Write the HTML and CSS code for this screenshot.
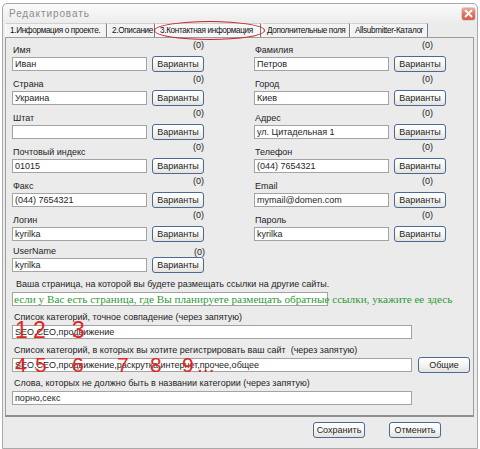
FILE: index.html
```html
<!DOCTYPE html>
<html lang="ru">
<head>
<meta charset="utf-8">
<title>Редактировать</title>
<link rel="stylesheet" href="styles.css">
</head>
<body>
<div class="window">
  <div class="titlebar">
    <span class="title">Редактировать</span>
    <span class="close"><svg width="9" height="9" viewBox="0 0 9 9"><path d="M1 1 L8 8 M8 1 L1 8" stroke="#fff" stroke-width="1.8" fill="none"/></svg></span>
  </div>
  <div class="tabs">
    <span class="tab t1">1.Информация о проекте.</span>
    <span class="tab t2">2.Описание</span>
    <span class="tab t3 active">3.Контактная информация</span>
    <span class="tab t4">Дополнительные поля</span>
    <span class="tab t5">Allsubmitter-Каталог</span>
    <span class="ring"></span>
  </div>
  <div class="panel">
    <div class="fields">
      <div class="field"><span class="lbl">Имя</span><span class="cnt">(0)</span><input class="inp" type="text" value="Иван"><button class="btn">Варианты</button></div>
      <div class="field right"><span class="lbl">Фамилия</span><span class="cnt">(0)</span><input class="inp" type="text" value="Петров"><button class="btn">Варианты</button></div>
      <div class="field"><span class="lbl">Страна</span><span class="cnt">(0)</span><input class="inp" type="text" value="Украина"><button class="btn">Варианты</button></div>
      <div class="field right"><span class="lbl">Город</span><span class="cnt">(0)</span><input class="inp" type="text" value="Киев"><button class="btn">Варианты</button></div>
      <div class="field"><span class="lbl">Штат</span><span class="cnt">(0)</span><input class="inp" type="text" value=""><button class="btn">Варианты</button></div>
      <div class="field right"><span class="lbl">Адрес</span><span class="cnt">(0)</span><input class="inp" type="text" value="ул. Цитадельная 1"><button class="btn">Варианты</button></div>
      <div class="field"><span class="lbl">Почтовый индекс</span><span class="cnt">(0)</span><input class="inp" type="text" value="01015"><button class="btn">Варианты</button></div>
      <div class="field right"><span class="lbl">Телефон</span><span class="cnt">(0)</span><input class="inp" type="text" value="(044) 7654321"><button class="btn">Варианты</button></div>
      <div class="field"><span class="lbl">Факс</span><span class="cnt">(0)</span><input class="inp" type="text" value="(044) 7654321"><button class="btn">Варианты</button></div>
      <div class="field right"><span class="lbl">Email</span><span class="cnt">(0)</span><input class="inp" type="text" value="mymail@domen.com"><button class="btn">Варианты</button></div>
      <div class="field"><span class="lbl">Логин</span><span class="cnt">(0)</span><input class="inp" type="text" value="kyrilka"><button class="btn">Варианты</button></div>
      <div class="field right"><span class="lbl">Пароль</span><span class="cnt">(0)</span><input class="inp" type="text" value="kyrilka"><button class="btn">Варианты</button></div>
      <div class="field last"><span class="lbl">UserName</span><span class="cnt">(0)</span><input class="inp" type="text" value="kyrilka"><button class="btn">Варианты</button></div>
    </div>

    <div class="block page">
      <div class="blbl">Ваша страница, на которой вы будете размещать ссылки на другие сайты.</div>
      <div class="row">
        <div class="wrap">
          <input class="inp w316" type="text" value="">
          <span class="hint">если у Вас есть страница, где Вы планируете размещать обратные ссылки, укажите ее здесь</span>
        </div>
      </div>
    </div>

    <div class="block">
      <div class="blbl">Список категорий, точное совпадение (через запятую)</div>
      <div class="row">
        <div class="wrap">
          <input class="inp w400" type="text" value="SEO,CEO,продвижение">
          <span class="num n1">1</span><span class="num n2">2</span><span class="num n3">3</span>
        </div>
      </div>
    </div>

    <div class="block">
      <div class="blbl">Список категорий, в которых вы хотите регистрировать ваш сайт&nbsp; (через запятую)</div>
      <div class="row">
        <div class="wrap">
          <input class="inp w400" type="text" value="SEO,CEO,продвижение,раскрутка,интернет,прочее,общее">
          <span class="num s n4">4</span><span class="num s n5">5</span><span class="num s n6">6</span><span class="num s n7">7</span><span class="num s n8">8</span><span class="num s n9">9</span><span class="num s dots">...</span>
        </div>
        <button class="btn">Общие</button>
      </div>
    </div>

    <div class="block">
      <div class="blbl">Слова, которых не должно быть в названии категории (через запятую)</div>
      <div class="row">
        <input class="inp w400" type="text" value="порно,секс">
      </div>
    </div>
  </div>
  <div class="footer">
    <button class="btn">Сохранить</button>
    <button class="btn">Отменить</button>
  </div>
</div>
</body>
</html>
```

FILE: styles.css
```css
* { box-sizing: border-box; }
html, body { margin: 0; padding: 0; background: #fff; }
body {
  font-family: "Liberation Sans", Arial, sans-serif;
  font-size: 9px;
  color: #1e1e1e;
  width: 480px;
  height: 449px;
  overflow: hidden;
}
.window {
  margin: 3px 2px 0 2px;
  height: 446px;
  border: 1px solid #a9a9a9;
  border-radius: 5px 5px 0 0;
  background: #ebebeb;
  position: relative;
}
.titlebar {
  height: 19px;
  display: flex;
  align-items: center;
  justify-content: space-between;
  padding: 0 1px 0 6px;
  background: linear-gradient(#fbfbfb, #ececec);
  border-radius: 5px 5px 0 0;
}
.title {
  font-size: 10px;
  letter-spacing: 0.9px;
  color: #8d8d8d;
}
.close {
  width: 15px;
  height: 14px;
  border-radius: 3px;
  border: 1px solid #d6d6d6;
  background: linear-gradient(#f0a496, #dd6d5c 60%, #d5604e);
  display: flex;
  align-items: center;
  justify-content: center;
}
.tabs {
  display: flex;
  height: 14px;
  margin-left: 2px;
  position: relative;
}
.tab {
  height: 14px;
  line-height: 13px;
  padding: 0 0 0 4px;
  background: #f3f3f3;
  border-top: 1px solid #d0d0d0;
  border-left: 1px solid #fff;
  border-right: 1px solid #7c7c7c;
  font-family: "Liberation Sans", Arial, sans-serif;
  font-size: 8.2px;
  letter-spacing: -0.35px;
  white-space: nowrap;
  color: #111;
}
.t1 { width: 102px; }
.t2 { width: 48px; }
.t3 { width: 106px; background: #f7f7f7; }
.t4 { width: 88px; margin-left: 1px; }
.t5 { width: 78px; }
.ring {
  position: absolute;
  left: 149px;
  top: -2px;
  width: 111px;
  height: 19px;
  border: 1.5px solid #c8232a;
  border-radius: 50%;
}
.panel {
  margin: 0 3px 0 2px;
  height: 380px;
  border: 1px solid #9d9d9d;
  border-bottom: 2px solid #8f8f8f;
  background: #ebebeb;
  padding: 5px 0 0 6px;
}
.fields {
  display: grid;
  grid-template-columns: 192px 192px;
  column-gap: 50px;
  row-gap: 5px;
}
.field {
  display: grid;
  grid-template-columns: 135px 52px;
  grid-template-rows: 13px 16px;
  column-gap: 5px;
  align-items: center;
}
.field .lbl {
  align-self: end;
  line-height: 11px;
  padding-left: 1px;
}
.field .cnt {
  justify-self: end;
  align-self: start;
  line-height: 9px;
  margin-top: -2px;
}
.field.right .cnt { margin-right: 13px; }
.field.last { margin-top: -3px; }
.field.last .cnt { margin-top: 4px; margin-right: -1px; }
.inp {
  height: 14px;
  width: 135px;
  border: 1px solid #a3a3a3;
  background: #fff;
  font-family: "Liberation Sans", Arial, sans-serif;
  font-size: 9px;
  color: #1e1e1e;
  padding: 0 2px;
  margin: 0;
  outline: none;
}
.btn {
  height: 16px;
  width: 52px;
  padding: 0;
  margin: 0;
  border: 1px solid #4a6a95;
  border-radius: 3px;
  background: linear-gradient(#ffffff, #f3f3ef 60%, #e3e2dc);
  font-family: "Liberation Sans", Arial, sans-serif;
  font-size: 9px;
  color: #1e1e1e;
}
.block {
  margin-top: 5px;
}
.block.page { margin-top: 6px; padding-left: 3px; }
.block.page .row { margin-left: -3px; }
.blbl {
  line-height: 11px;
  height: 12px;
  padding-left: 2px;
  white-space: nowrap;
}
.block.page .blbl { padding-left: 1px; }
.row {
  display: flex;
  align-items: center;
  gap: 6px;
  height: 16px;
}
.wrap {
  position: relative;
  height: 14px;
}
.w316 { width: 316px; }
.w400 { width: 400px; }
.hint {
  position: absolute;
  left: 2px;
  top: 0;
  line-height: 14px;
  white-space: nowrap;
  font-family: "Liberation Serif", "Times New Roman", serif;
  font-size: 11.2px;
  color: #2f9a36;
}
.num {
  position: absolute;
  top: -6px;
  font-size: 23px;
  line-height: 23px;
  color: #e3241f;
}
.num.s { top: -4px; font-size: 21px; line-height: 21px; }
.n1 { left: 3px; }
.n2 { left: 21px; }
.n3 { left: 60px; }
.n4 { left: 3px; }
.n5 { left: 23px; }
.n6 { left: 60px; }
.n7 { left: 105px; }
.n8 { left: 138px; }
.n9 { left: 170px; }
.dots { left: 185px; }
.footer {
  display: flex;
  justify-content: flex-end;
  gap: 24px;
  padding: 5px 36px 0 0;
}
```
